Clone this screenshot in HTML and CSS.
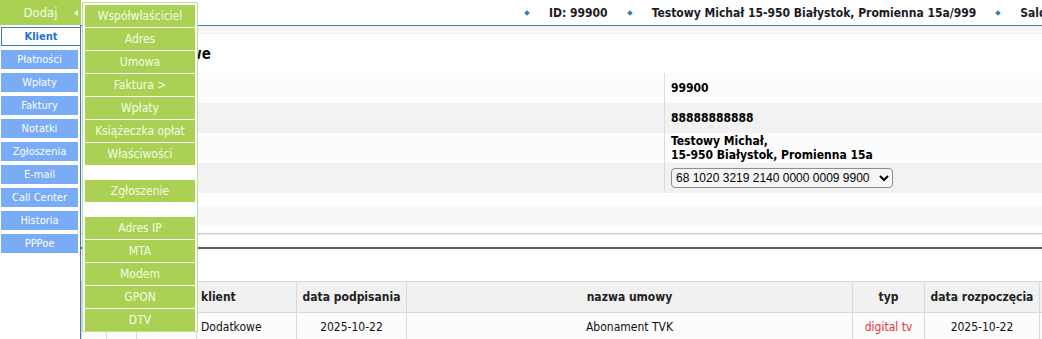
FILE: index.html
```html
<!DOCTYPE html>
<html lang="pl">
<head>
    <meta charset="UTF-8">
    <meta name="viewport" content="width=device-width, initial-scale=1.0">
    <title>Klient 99900</title>
    <link rel="stylesheet" href="styles.css">
</head>
<body>
    <!-- Lewe menu -->
    <div class="sidebar">
        <div class="add-bar">Dodaj<span class="arrow"></span></div>
        <div class="tabs">
            <div class="tab active">Klient</div>
            <div class="tab">Płatności</div>
            <div class="tab">Wpłaty</div>
            <div class="tab">Faktury</div>
            <div class="tab">Notatki</div>
            <div class="tab">Zgłoszenia</div>
            <div class="tab">E-mail</div>
            <div class="tab">Call Center</div>
            <div class="tab">Historia</div>
            <div class="tab">PPPoe</div>
        </div>
    </div>

    <!-- Rozwinięte menu "Dodaj" -->
    <div class="add-menu">
        <div class="menu-item">Współwłaściciel</div>
        <div class="menu-item">Adres</div>
        <div class="menu-item">Umowa</div>
        <div class="menu-item">Faktura &gt;</div>
        <div class="menu-item">Wpłaty</div>
        <div class="menu-item">Książeczka opłat</div>
        <div class="menu-item">Właściwości</div>
        <div class="menu-sep"></div>
        <div class="menu-item">Zgłoszenie</div>
        <div class="menu-sep"></div>
        <div class="menu-item">Adres IP</div>
        <div class="menu-item">MTA</div>
        <div class="menu-item">Modem</div>
        <div class="menu-item">GPON</div>
        <div class="menu-item">DTV</div>
    </div>

    <div class="main">
        <!-- Pasek z danymi klienta -->
        <div class="topbar">
            <span class="dot"></span><span>ID: 99900</span>
            <span class="dot"></span><span>Testowy Michał 15-950 Białystok, Promienna 15a/999</span>
            <span class="dot"></span><span>Saldo</span>
        </div>
        <div class="strip"></div>

        <h2 class="title">Dane osobowe</h2>

        <table class="info">
            <tr>
                <td class="label"></td>
                <td class="value">99900</td>
            </tr>
            <tr>
                <td class="label"></td>
                <td class="value">88888888888</td>
            </tr>
            <tr>
                <td class="label"></td>
                <td class="value">Testowy Michał,<br>15-950 Białystok, Promienna 15a</td>
            </tr>
            <tr>
                <td class="label"></td>
                <td class="value">
                    <select class="account">
                        <option>68 1020 3219 2140 0000 0009 9900</option>
                    </select>
                </td>
            </tr>
        </table>

        <div class="extra">
            <div class="extra-row"></div>
        </div>
        <div class="divider"></div>

        <!-- Umowy -->
        <table class="contracts">
            <colgroup>
                <col style="width: 25px">
                <col style="width: 30px">
                <col style="width: 60px">
                <col style="width: 100px">
                <col style="width: 110px">
                <col style="width: 446px">
                <col style="width: 72px">
                <col style="width: 115px">
                <col style="width: 100px">
            </colgroup>
            <tr>
                <th></th>
                <th></th>
                <th></th>
                <th class="left">klient</th>
                <th>data podpisania</th>
                <th>nazwa umowy</th>
                <th>typ</th>
                <th>data rozpoczęcia</th>
                <th></th>
            </tr>
            <tr>
                <td></td>
                <td></td>
                <td></td>
                <td class="left">Dodatkowe</td>
                <td>2025-10-22</td>
                <td>Abonament TVK</td>
                <td class="red">digital tv</td>
                <td>2025-10-22</td>
                <td></td>
            </tr>
        </table>
    </div>
</body>
</html>
```

FILE: styles.css
```css
body {
    margin: 0;
    font-family: "DejaVu Sans Condensed", "DejaVu Sans", sans-serif;
    font-size: 12px;
    color: #111;
    background-color: #fff;
    display: flex;
    overflow: hidden;
    height: 339px;
}

/* Lewe menu */
.sidebar {
    width: 81px;
    flex-shrink: 0;
    display: flex;
    flex-direction: column;
}

.add-bar {
    height: 25px;
    background-color: #aad153;
    color: #f6fbe6;
    font-size: 13px;
    display: flex;
    align-items: center;
    justify-content: center;
    position: relative;
}

.add-bar .arrow {
    position: absolute;
    right: 3px;
    top: 10px;
    width: 0;
    height: 0;
    border-top: 3px solid transparent;
    border-bottom: 3px solid transparent;
    border-right: 4px solid #fff;
}

.tabs {
    flex: 1;
    border-right: 1px solid #3a7bbd;
    padding-top: 2px;
    display: flex;
    flex-direction: column;
    gap: 4px;
}

.tab {
    height: 19px;
    margin: 0 2px 0 1px;
    background-color: #7aabf7;
    color: #fff;
    font-size: 11px;
    display: flex;
    align-items: center;
    justify-content: center;
}

.tab.active {
    height: 17px;
    margin-right: 0;
    background-color: #fff;
    border: 1px solid #3a7bbd;
    border-right: none;
    color: #1f6fdc;
    font-weight: bold;
}

/* Menu "Dodaj" */
.add-menu {
    position: absolute;
    left: 82px;
    top: 2px;
    width: 110px;
    padding: 2px 2px 0 2px;
    background-color: #fff;
    border: 1px solid #c2de8c;
    display: flex;
    flex-direction: column;
    gap: 1px;
}

.menu-item {
    height: 22px;
    background-color: #aad153;
    color: #f6fbe6;
    display: flex;
    align-items: center;
    justify-content: center;
}

.menu-sep {
    height: 13px;
}

/* Część główna */
.main {
    flex: 1;
    min-width: 0;
    overflow: hidden;
}

.topbar {
    height: 25px;
    border-bottom: 1px solid #3d7ea6;
    display: flex;
    align-items: center;
    padding-left: 444px;
    font-weight: bold;
    white-space: nowrap;
    color: #1b1b24;
}

.topbar .dot {
    width: 4px;
    height: 4px;
    background-color: #3d7ea6;
    transform: rotate(45deg);
    margin: 0 20px;
    flex-shrink: 0;
}

.topbar .dot:first-child {
    margin-left: 0;
}

.strip {
    height: 7px;
    background: linear-gradient(#f2f2f2, #f8f8f8);
    border-bottom: 1px solid #efefef;
}

.title {
    margin: 0;
    height: 39px;
    padding-left: 19px;
    font-size: 15px;
    display: flex;
    align-items: center;
}

/* Tabela danych */
.info {
    width: 100%;
    border-collapse: collapse;
}

.info tr {
    height: 30px;
    background-color: #fcfcfc;
}

.info tr:nth-child(even) {
    background-color: #f2f2f2;
}

.info .label {
    width: 574px;
    padding-left: 8px;
}

.info .value {
    border-left: 1px solid #dcdcdc;
    padding: 0 6px;
    font-weight: bold;
    line-height: 14px;
    color: #000;
}

.account {
    width: 222px;
    height: 20px;
    font-family: "Liberation Sans", Arial, sans-serif;
    font-size: 12px;
    border: 1px solid #8d8d8d;
    border-radius: 4px;
    background-color: #f6f6f6;
    color: #000;
}

.extra {
    padding: 13px 0 7px 0;
    border-bottom: 1px solid #c8c8c8;
    box-shadow: 0 1px 2px rgba(0, 0, 0, 0.1);
}

.extra-row {
    height: 20px;
    background-color: #f8f8f8;
}

.divider {
    margin-top: 13px;
    border-top: 2px solid #5e5e5e;
}

/* Tabela umów */
.contracts {
    margin-top: 32px;
    width: 1058px;
    table-layout: fixed;
    border-collapse: collapse;
}

.contracts th,
.contracts td {
    border: 1px solid #dadada;
    text-align: center;
    white-space: nowrap;
    overflow: hidden;
}

.contracts th {
    height: 28px;
    background-color: #f1f1f1;
    color: #222;
}

.contracts td {
    height: 26px;
    background-color: #fcfcfc;
}

.contracts .left {
    text-align: left;
    padding-left: 4px;
}

.contracts .red {
    color: #e8323a;
}
```
